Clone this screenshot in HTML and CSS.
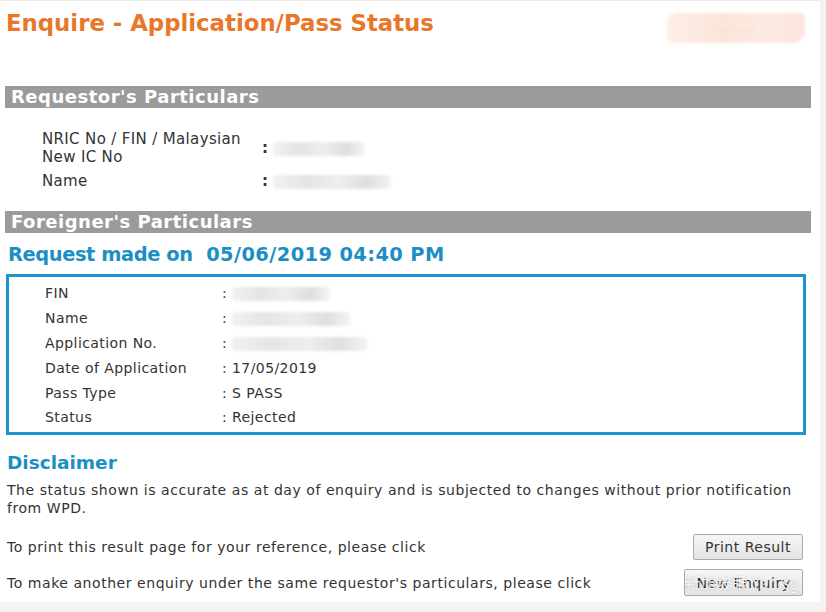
FILE: index.html
```html
<!DOCTYPE html>
<html>
<head>
<meta charset="utf-8">
<link rel="stylesheet" href="styles.css">
</head>
<body>
<div class="page">
  <header class="head">
    <h1 class="title">Enquire - Application/Pass Status</h1>
    <div class="logo-blur"><span class="dots">. .. . .. .</span></div>
  </header>

  <h2 class="bar">Requestor's Particulars</h2>
  <table class="req">
    <tr class="r-tall">
      <td class="lbl">NRIC No / FIN / Malaysian<br>New IC No</td>
      <td class="col"><b>:</b> <span class="blur w100"></span></td>
    </tr>
    <tr>
      <td class="lbl">Name</td>
      <td class="col"><b>:</b> <span class="blur w120"></span></td>
    </tr>
  </table>

  <h2 class="bar bar2">Foreigner's Particulars</h2>
  <h3 class="made"><span class="made-lbl">Request made on</span>&nbsp; <span class="made-date">05/06/2019 04:40 PM</span></h3>

  <div class="box">
    <table class="info">
      <tr><td class="ilbl">FIN</td><td>: <span class="blur w95"></span></td></tr>
      <tr><td class="ilbl">Name</td><td>: <span class="blur w115"></span></td></tr>
      <tr><td class="ilbl">Application No.</td><td>: <span class="blur w135"></span></td></tr>
      <tr><td class="ilbl">Date of Application</td><td>: 17/05/2019</td></tr>
      <tr><td class="ilbl">Pass Type</td><td>: S PASS</td></tr>
      <tr><td class="ilbl">Status</td><td>: Rejected</td></tr>
    </table>
  </div>

  <h3 class="disc">Disclaimer</h3>
  <p class="disc-text">The status shown is accurate as at day of enquiry and is subjected to changes without prior notification from WPD.</p>

  <div class="act act1">
    <span>To print this result page for your reference, please click</span>
    <button class="btn btn1">Print Result</button>
  </div>
  <div class="act act2">
    <span>To make another enquiry under the same requestor's particulars, please click</span>
    <div class="btn-wrap">
      <button class="btn btn2">New Enquiry</button>
      <span class="wm">新加坡眼 Yan.sg</span>
    </div>
  </div>
</div>
</body>
</html>
```

FILE: styles.css
```css
html, body {
  margin: 0;
  padding: 0;
}
body {
  background: #f3f3f3;
  font-family: "DejaVu Sans", Verdana, sans-serif;
  color: #333;
  width: 826px;
  height: 612px;
  overflow: hidden;
}
.page {
  background: #fff;
  width: 820px;
  height: 602px;
  border-top: 1px solid #ececec;
  box-sizing: border-box;
  overflow: hidden;
}
.head {
  display: flex;
  justify-content: space-between;
  align-items: flex-start;
  height: 85px;
}
.title {
  margin: 8px 0 0 6px;
  font-size: 22.8px;
  line-height: 28px;
  font-weight: bold;
  color: #e8772a;
}
.logo-blur {
  margin: 12px 15px 0 0;
  width: 138px;
  height: 30px;
  background: linear-gradient(90deg, #fdeee6 0%, #fbe5da 40%, #fce9e0 70%, #fbe6dc 100%);
  border-radius: 10px 4px 12px 6px;
  filter: blur(1.5px);
  display: flex;
  align-items: center;
  justify-content: center;
}
.dots {
  font-size: 8px;
  color: #c2b0a6;
  letter-spacing: 1px;
}
.bar {
  margin: 0 9px 0 5px;
  height: 22px;
  line-height: 22px;
  background: #9b9b9b;
  color: #fff;
  font-size: 18px;
  letter-spacing: 0.5px;
  font-weight: bold;
  padding-left: 6px;
}
.req {
  border-collapse: collapse;
  margin: 20px 0 0 42px;
  font-size: 15px;
  letter-spacing: 0.35px;
  line-height: 18px;
}
.req td {
  padding: 0;
  vertical-align: middle;
}
.req tr td {
  height: 26px;
}
.req .r-tall td {
  height: 40px;
}
.req .lbl {
  width: 220px;
}
.bar2 {
  margin-top: 17px;
}
.blur {
  display: inline-block;
  height: 14px;
  vertical-align: middle;
  background: linear-gradient(90deg, #f1f1f1 0%, #e4e4e4 30%, #eeeeee 55%, #dedede 80%, #f4f4f4 100%);
  filter: blur(1.5px);
  border-radius: 4px;
}
.w95 { width: 98px; }
.w100 { width: 92px; }
.w115 { width: 118px; }
.w120 { width: 118px; }
.w135 { width: 135px; }
.made {
  margin: 10px 0 0 8px;
  font-size: 19.4px;
  line-height: 24px;
  font-weight: bold;
  color: #1b8fc4;
}
.made-lbl {
  letter-spacing: -0.4px;
}
.made-date {
  letter-spacing: 0.4px;
}
.box {
  margin: 7px 14px 0 6px;
  border: 3px solid #1b96c9;
  padding: 4px 0 0 36px;
  box-sizing: border-box;
  height: 161px;
}
.info {
  border-collapse: collapse;
  font-size: 14px;
  letter-spacing: 0.42px;
}
.info td {
  padding: 0;
  height: 24.8px;
  line-height: 18px;
  vertical-align: middle;
}
.info .ilbl {
  width: 177px;
}
.disc {
  margin: 16px 0 0 7px;
  font-size: 18.5px;
  line-height: 24px;
  font-weight: bold;
  color: #1b8fc4;
}
.disc-text {
  margin: 6px 20px 0 7px;
  font-size: 14px;
  letter-spacing: 0.55px;
  line-height: 18px;
}
.act {
  display: flex;
  justify-content: space-between;
  align-items: center;
  margin: 0 17px 0 7px;
  font-size: 14px;
  letter-spacing: 0.55px;
}
.act1 {
  margin-top: 17px;
  height: 26px;
}
.act2 {
  margin-top: 9px;
  height: 27px;
}
.btn {
  font-family: "DejaVu Sans", Verdana, sans-serif;
  font-size: 14px;
  letter-spacing: 0.5px;
  color: #333;
  background: linear-gradient(#f6f6f6, #e4e4e4);
  border: 1px solid #a9a9a9;
  border-radius: 2px;
  padding: 0;
  margin: 0;
}
.btn1 {
  width: 110px;
  height: 26px;
}
.btn2 {
  width: 119px;
  height: 27px;
}
.btn-wrap {
  position: relative;
}
.wm {
  position: absolute;
  left: 0;
  top: 3px;
  font-family: "Noto Sans CJK SC", "DejaVu Sans", sans-serif;
  font-size: 16px;
  line-height: 20px;
  letter-spacing: 0;
  color: rgba(255, 255, 255, 0.92);
  text-shadow: 0 0 1px rgba(0, 0, 0, 0.35);
  white-space: nowrap;
  pointer-events: none;
}
```
